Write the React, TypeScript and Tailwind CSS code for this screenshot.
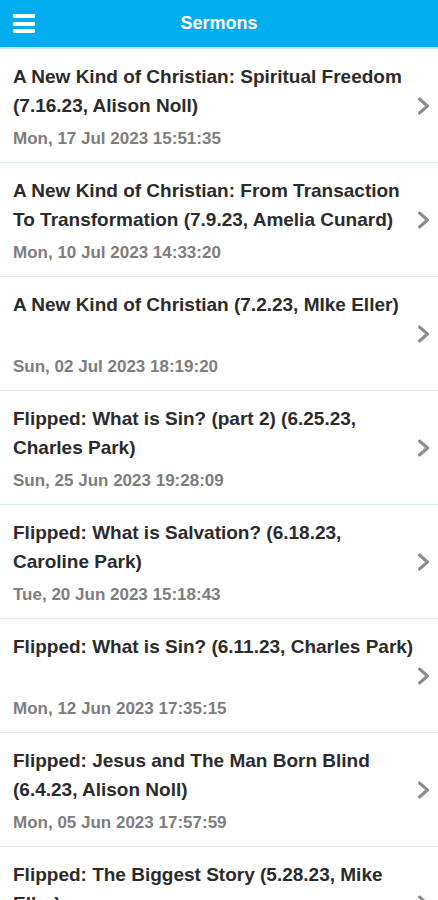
interface Sermon {
  title: string;
  date: string;
}

const sermons: Sermon[] = [
  { title: "A New Kind of Christian: Spiritual Freedom (7.16.23, Alison Noll)", date: "Mon, 17 Jul 2023 15:51:35" },
  { title: "A New Kind of Christian: From Transaction To Transformation (7.9.23, Amelia Cunard)", date: "Mon, 10 Jul 2023 14:33:20" },
  { title: "A New Kind of Christian (7.2.23, MIke Eller)", date: "Sun, 02 Jul 2023 18:19:20" },
  { title: "Flipped: What is Sin? (part 2) (6.25.23, Charles Park)", date: "Sun, 25 Jun 2023 19:28:09" },
  { title: "Flipped: What is Salvation? (6.18.23, Caroline Park)", date: "Tue, 20 Jun 2023 15:18:43" },
  { title: "Flipped: What is Sin? (6.11.23, Charles Park)", date: "Mon, 12 Jun 2023 17:35:15" },
  { title: "Flipped: Jesus and The Man Born Blind (6.4.23, Alison Noll)", date: "Mon, 05 Jun 2023 17:57:59" },
  { title: "Flipped: The Biggest Story (5.28.23, Mike Eller)", date: "Sun, 28 May 2023 12:10:44" },
];

function SermonRow({ title, date }: Sermon) {
  return (
    <div className="flex items-center border-b border-[#cfe9f6] pl-[13px] pr-[8px] pt-[13px] pb-[13px]">
      <div className="flex-1">
        <div className="h-[58px] text-[19px] font-bold leading-[29px] text-[#2b2b2b]">{title}</div>
        <div className="mt-[9px] text-[17px] font-bold leading-[20px] text-[#7d7d7d]">{date}</div>
      </div>
      {/* chevron */}
      <svg className="h-[18px] w-[13px] shrink-0 text-[#8c8c8c]" viewBox="0 0 13 18" fill="none">
        <path d="M2.5 2l8 7-8 7" stroke="currentColor" strokeWidth="3" strokeLinecap="round" strokeLinejoin="round" />
      </svg>
    </div>
  );
}

export default function App() {
  return (
    <div className="h-[900px] overflow-hidden bg-white font-['Liberation_Sans',Arial,sans-serif]">
      {/* header */}
      <div className="flex h-[49px] items-center border-b-2 border-[#bfe3f5] bg-[#00aeef] px-[13px]">
        <div className="flex w-[22px] flex-col gap-[3.5px]">
          <span className="h-[4px] rounded-[1px] bg-white" />
          <span className="h-[4px] rounded-[1px] bg-white" />
          <span className="h-[4px] rounded-[1px] bg-white" />
        </div>
        <div className="flex-1 pr-[22px] text-center text-[18px] font-bold text-white">Sermons</div>
      </div>

      {sermons.map((s) => (
        <SermonRow key={s.date} {...s} />
      ))}
    </div>
  );
}
